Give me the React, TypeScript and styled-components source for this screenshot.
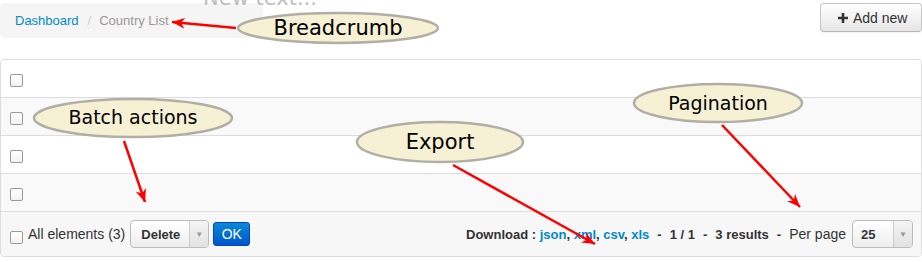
import React from 'react'
import styled, { createGlobalStyle } from 'styled-components'

const GlobalStyle = createGlobalStyle`
	html, body {
		margin: 0;
		padding: 0;
		background: #fff;
	}
	body {
		font-family: "Liberation Sans", Arial, sans-serif;
		font-size: 14px;
		color: #333;
	}
`

const Page = styled.div`
	position: relative;
	width: 922px;
	height: 262px;
	overflow: hidden;
`

const Header = styled.div`
	display: flex;
	justify-content: space-between;
	align-items: flex-start;
	padding-top: 3px;
	height: 59px;
	box-sizing: border-box;
`

const Breadcrumb = styled.ul`
	display: flex;
	align-items: center;
	margin: 0;
	padding: 0 15px;
	list-style: none;
	width: 263px;
	height: 35px;
	box-sizing: border-box;
	background: #f5f5f5;
	border-radius: 4px;
	font-size: 13px;
	& li {
		color: #999;
	}
	& a {
		color: #0088cc;
		text-decoration: none;
	}
`

const Divider = styled.span`
	color: #ccc;
	padding: 0 8px 0 9px;
`

const GhostTitle = styled.div`
	position: absolute;
	left: 203px;
	top: -17px;
	font-family: "DejaVu Sans", sans-serif;
	font-size: 21px;
	color: #bdbdbd;
	line-height: 30px;
`

const AddButton = styled.button`
	display: flex;
	align-items: center;
	gap: 5px;
	width: 102px;
	height: 29px;
	padding: 0 0 0 17px;
	box-sizing: border-box;
	border: 1px solid #c5c5c5;
	border-bottom-color: #b3b3b3;
	border-radius: 4px;
	background: linear-gradient(#ffffff, #e6e6e6);
	box-shadow: inset 0 1px 0 rgba(255,255,255,.2), 0 1px 2px rgba(0,0,0,.05);
	font-family: "Liberation Sans", Arial, sans-serif;
	font-size: 14px;
	color: #333;
`

const Table = styled.div`
	border: 1px solid #ddd;
	border-radius: 4px;
	overflow: hidden;
`

const Row = styled.div<{ $odd: boolean }>`
	height: 38px;
	box-sizing: border-box;
	padding: 14px 0 0 9px;
	background: ${p => (p.$odd ? '#f9f9f9' : '#fff')};
	border-top: 1px solid #ddd;
	&:first-child {
		border-top: 0;
		height: 37px;
	}
`

const Check = styled.input`
	appearance: none;
	display: block;
	width: 13px;
	height: 13px;
	margin: 0;
	border: 1px solid #999;
	border-radius: 2px;
	background: linear-gradient(#fff, #f3f3f3);
	box-sizing: border-box;
`

const Footer = styled.div`
	display: flex;
	justify-content: space-between;
	align-items: center;
	height: 45px;
	box-sizing: border-box;
	padding: 0 8px 0 9px;
	border-top: 1px solid #ddd;
	background: #f7f7f7;
`

const Group = styled.div`
	display: flex;
	align-items: center;
`

const AllLabel = styled.span`
	margin: 0 5px 0 5px;
	font-size: 14px;
	color: #333;
`

const FooterCheck = styled(Check)`
	margin-top: 6px;
`

const Select = styled.div<{ $width: number }>`
	display: flex;
	width: ${p => p.$width}px;
	height: 28px;
	box-sizing: border-box;
	border: 1px solid #bbb;
	border-radius: 4px;
	background: linear-gradient(#ffffff, #eeeeee);
	overflow: hidden;
	font-size: 13px;
	font-weight: bold;
	color: #333;
`

const SelectValue = styled.span<{ $pad: number }>`
	flex: 1;
	display: flex;
	align-items: center;
	padding-left: ${p => p.$pad}px;
`

const SelectArrow = styled.span`
	display: flex;
	align-items: center;
	justify-content: center;
	width: 18px;
	border-left: 1px solid #ccc;
	background: linear-gradient(#f4f4f4, #e2e2e2);
	color: #999;
	font-size: 8px;
	font-weight: normal;
`

const OkButton = styled.button`
	margin-left: 4px;
	width: 37px;
	height: 24px;
	padding: 0;
	border: 1px solid #0045c4;
	border-radius: 3px;
	background: linear-gradient(#0a8ad6, #0055cc);
	color: #fff;
	font-family: "Liberation Sans", Arial, sans-serif;
	font-size: 14px;
`

const Info = styled.div`
	font-size: 13px;
	font-weight: bold;
	color: #333;
	& a {
		color: #0088cc;
		text-decoration: none;
	}
`

const Dash = styled.span`
	margin: 0 8px;
`

const PerPage = styled.span`
	margin: 0 6px 0 0;
	font-size: 14px;
	color: #333;
`

const Overlay = styled.svg`
	position: absolute;
	left: 0;
	top: 0;
	pointer-events: none;
	font-family: "DejaVu Sans", sans-serif;
`

const notes = [
	{ label: 'Breadcrumb', cx: 338, cy: 28, rx: 100, ry: 15, ty: 35, size: 21, from: [236, 28], to: [172, 22] },
	{ label: 'Batch actions', cx: 133, cy: 118, rx: 99, ry: 19, ty: 124, size: 19, from: [124, 141], to: [145, 202] },
	{ label: 'Export', cx: 440, cy: 142, rx: 83, ry: 20, ty: 149, size: 21, from: [453, 165], to: [595, 244] },
	{ label: 'Pagination', cx: 718, cy: 103, rx: 84, ry: 19, ty: 110, size: 19, from: [722, 125], to: [800, 207] },
]

const Annotations = () => (
	<Overlay width={922} height={262}>
		<defs>
			<marker id="head" markerUnits="userSpaceOnUse" markerWidth={14} markerHeight={11} refX={13} refY={5.5} orient="auto">
				<path d="M0,0 L13,5.5 L0,11 L4,5.5 Z" fill="#ff0000" />
			</marker>
		</defs>
		{notes.map(n => (
			<g key={n.label}>
				<line x1={n.from[0]} y1={n.from[1]} x2={n.to[0]} y2={n.to[1]} stroke="#ff0000" strokeWidth={2.5} markerEnd="url(#head)" />
				<ellipse cx={n.cx} cy={n.cy} rx={n.rx} ry={n.ry} fill="#f6f1d4" stroke="#b1afa5" strokeWidth={2.5} />
				<text x={n.cx} y={n.ty} fontSize={n.size} textAnchor="middle" fill="#000">{n.label}</text>
			</g>
		))}
	</Overlay>
)

const App = () => {
	const rows = [0, 1, 2, 3]
	return (
		<Page>
			<GlobalStyle />
			<Header>
				<Breadcrumb>
					<li><a href="#">Dashboard</a><Divider>/</Divider></li>
					<li>Country List</li>
				</Breadcrumb>
				<AddButton>
					<svg width="10" height="10" viewBox="0 0 10 10">
						<path d="M3.7 0h2.6v3.7H10v2.6H6.3V10H3.7V6.3H0V3.7h3.7z" fill="#333" />
					</svg>
					Add new
				</AddButton>
			</Header>
			<GhostTitle>New text...</GhostTitle>
			<Table>
				{rows.map(i => (
					<Row key={i} $odd={i % 2 === 1}>
						<Check type="checkbox" />
					</Row>
				))}
				<Footer>
					<Group>
						<FooterCheck type="checkbox" />
						<AllLabel>All elements (3)</AllLabel>
						<Select $width={79}>
							<SelectValue $pad={10}>Delete</SelectValue>
							<SelectArrow>▼</SelectArrow>
						</Select>
						<OkButton>OK</OkButton>
					</Group>
					<Group>
						<Info>
							Download : <a href="#">json</a>, <a href="#">xml</a>, <a href="#">csv</a>, <a href="#">xls</a>
							<Dash>-</Dash>1 / 1<Dash>-</Dash>3 results<Dash>-</Dash>
						</Info>
						<PerPage>Per page</PerPage>
						<Select $width={61}>
							<SelectValue $pad={8}>25</SelectValue>
							<SelectArrow>▼</SelectArrow>
						</Select>
					</Group>
				</Footer>
			</Table>
			<Annotations />
		</Page>
	)
}

export default App
